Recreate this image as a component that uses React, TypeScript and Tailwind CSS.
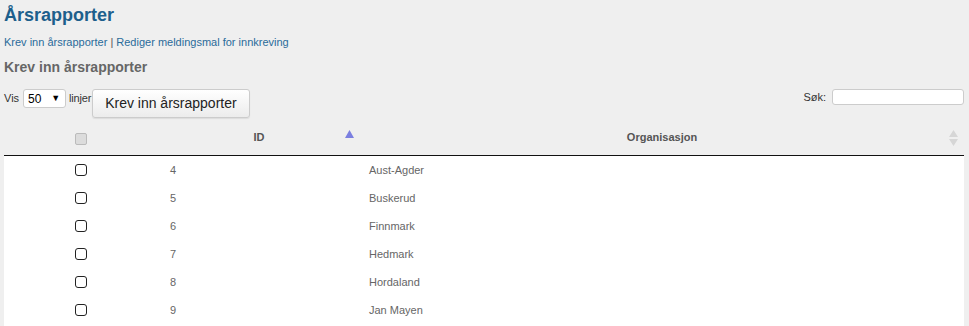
import { useState } from "react";

type Org = {
  id: number;
  name: string;
};

const orgs: Org[] = [
  { id: 4, name: "Aust-Agder" },
  { id: 5, name: "Buskerud" },
  { id: 6, name: "Finnmark" },
  { id: 7, name: "Hedmark" },
  { id: 8, name: "Hordaland" },
  { id: 9, name: "Jan Mayen" },
];

export default function App() {
  const [checked, setChecked] = useState<number[]>([]);

  const toggle = (id: number) =>
    setChecked((c) => (c.includes(id) ? c.filter((x) => x !== id) : [...c, id]));

  return (
    <div className="flex h-[326px] flex-col overflow-hidden bg-[#efefef] font-['Liberation_Sans',Arial,sans-serif] pt-[4px]">
      <h1 className="px-[4px] text-[18px] leading-[22px] font-bold text-[#1d5f8c]">
        Årsrapporter
      </h1>
      <div className="mt-[9px] px-[4px] text-[11px] leading-[14px] text-[#2a6b9a]">
        <a href="#" className="text-[#2a6b9a]">Krev inn årsrapporter</a>
        <span className="text-[#555]"> | </span>
        <a href="#" className="text-[#2a6b9a]">Rediger meldingsmal for innkreving</a>
      </div>
      <h2 className="mt-[10px] px-[4px] text-[14px] leading-[17px] font-bold text-[#666]">
        Krev inn årsrapporter
      </h2>

      <div className="mt-[13px] flex items-start justify-between px-[4px] text-[11px] text-[#333]">
        <div className="flex items-start">
          <span className="leading-[19px]">Vis</span>
          <div className="ml-[4px] flex h-[19px] w-[43px] items-center justify-between rounded-[3px] border border-[#ccc] bg-white pl-[4px] pr-[5px] text-[12px] text-black">
            <span>50</span>
            <span className="text-[9px]">▼</span>
          </div>
          <span className="ml-[3px] leading-[19px] tracking-[-0.2px]">linjer</span>
          <button className="ml-[1px] h-[29px] rounded-[3px] border border-[#ccc] bg-gradient-to-b from-white to-[#ececec] px-[12px] text-[14px] text-[#222] shadow-[0_1px_1px_rgba(0,0,0,0.08)]">
            Krev inn årsrapporter
          </button>
        </div>
        <div className="flex items-start pr-[1px]">
          <span className="leading-[16px]">Søk:</span>
          <input className="ml-[6px] h-[16px] w-[132px] rounded-[3px] border border-[#ccc] bg-white outline-none" />
        </div>
      </div>

      <div className="mx-[4px] mt-[2px] flex w-[960px] flex-1 flex-col">
        <div className="flex h-[36px] shrink-0 border-b border-[#111] text-[11px] font-bold text-[#555]">
          <div className="flex w-[154px] items-center justify-center pt-[2px]">
            <span className="block h-[12px] w-[12px] rounded-[2px] border border-[#bbb] bg-[#dcdcdc]" />
          </div>
          <div className="relative w-[202px] pt-[10px] text-center leading-[14px]">
            ID
            <svg className="absolute right-[6px] top-[10px]" width="9" height="8" viewBox="0 0 9 8">
              <path d="M4.5 0 L9 8 L0 8 Z" fill="#7b7fe0" />
            </svg>
          </div>
          <div className="relative flex-1 pt-[10px] text-center leading-[14px]">
            Organisasjon
            <svg className="absolute right-[6px] top-[10px]" width="9" height="16" viewBox="0 0 9 16">
              <path d="M4.5 0 L9 7 L0 7 Z M0 9 L9 9 L4.5 16 Z" fill="#d6d6d6" />
            </svg>
          </div>
        </div>
        <div className="flex-1 bg-white">
          {orgs.map((o) => (
            <div key={o.id} className="flex h-[28px] items-center text-[11px] text-[#666]">
              <div className="flex w-[154px] justify-center">
                <input
                  type="checkbox"
                  checked={checked.includes(o.id)}
                  onChange={() => toggle(o.id)}
                  className="h-[12px] w-[12px] appearance-none rounded-[3px] border-[1.5px] border-[#222] bg-white checked:bg-[#2a6b9a]"
                />
              </div>
              <div className="w-[202px] pl-[12px]">{o.id}</div>
              <div className="flex-1 pl-[9px]">{o.name}</div>
            </div>
          ))}
        </div>
      </div>
    </div>
  );
}
